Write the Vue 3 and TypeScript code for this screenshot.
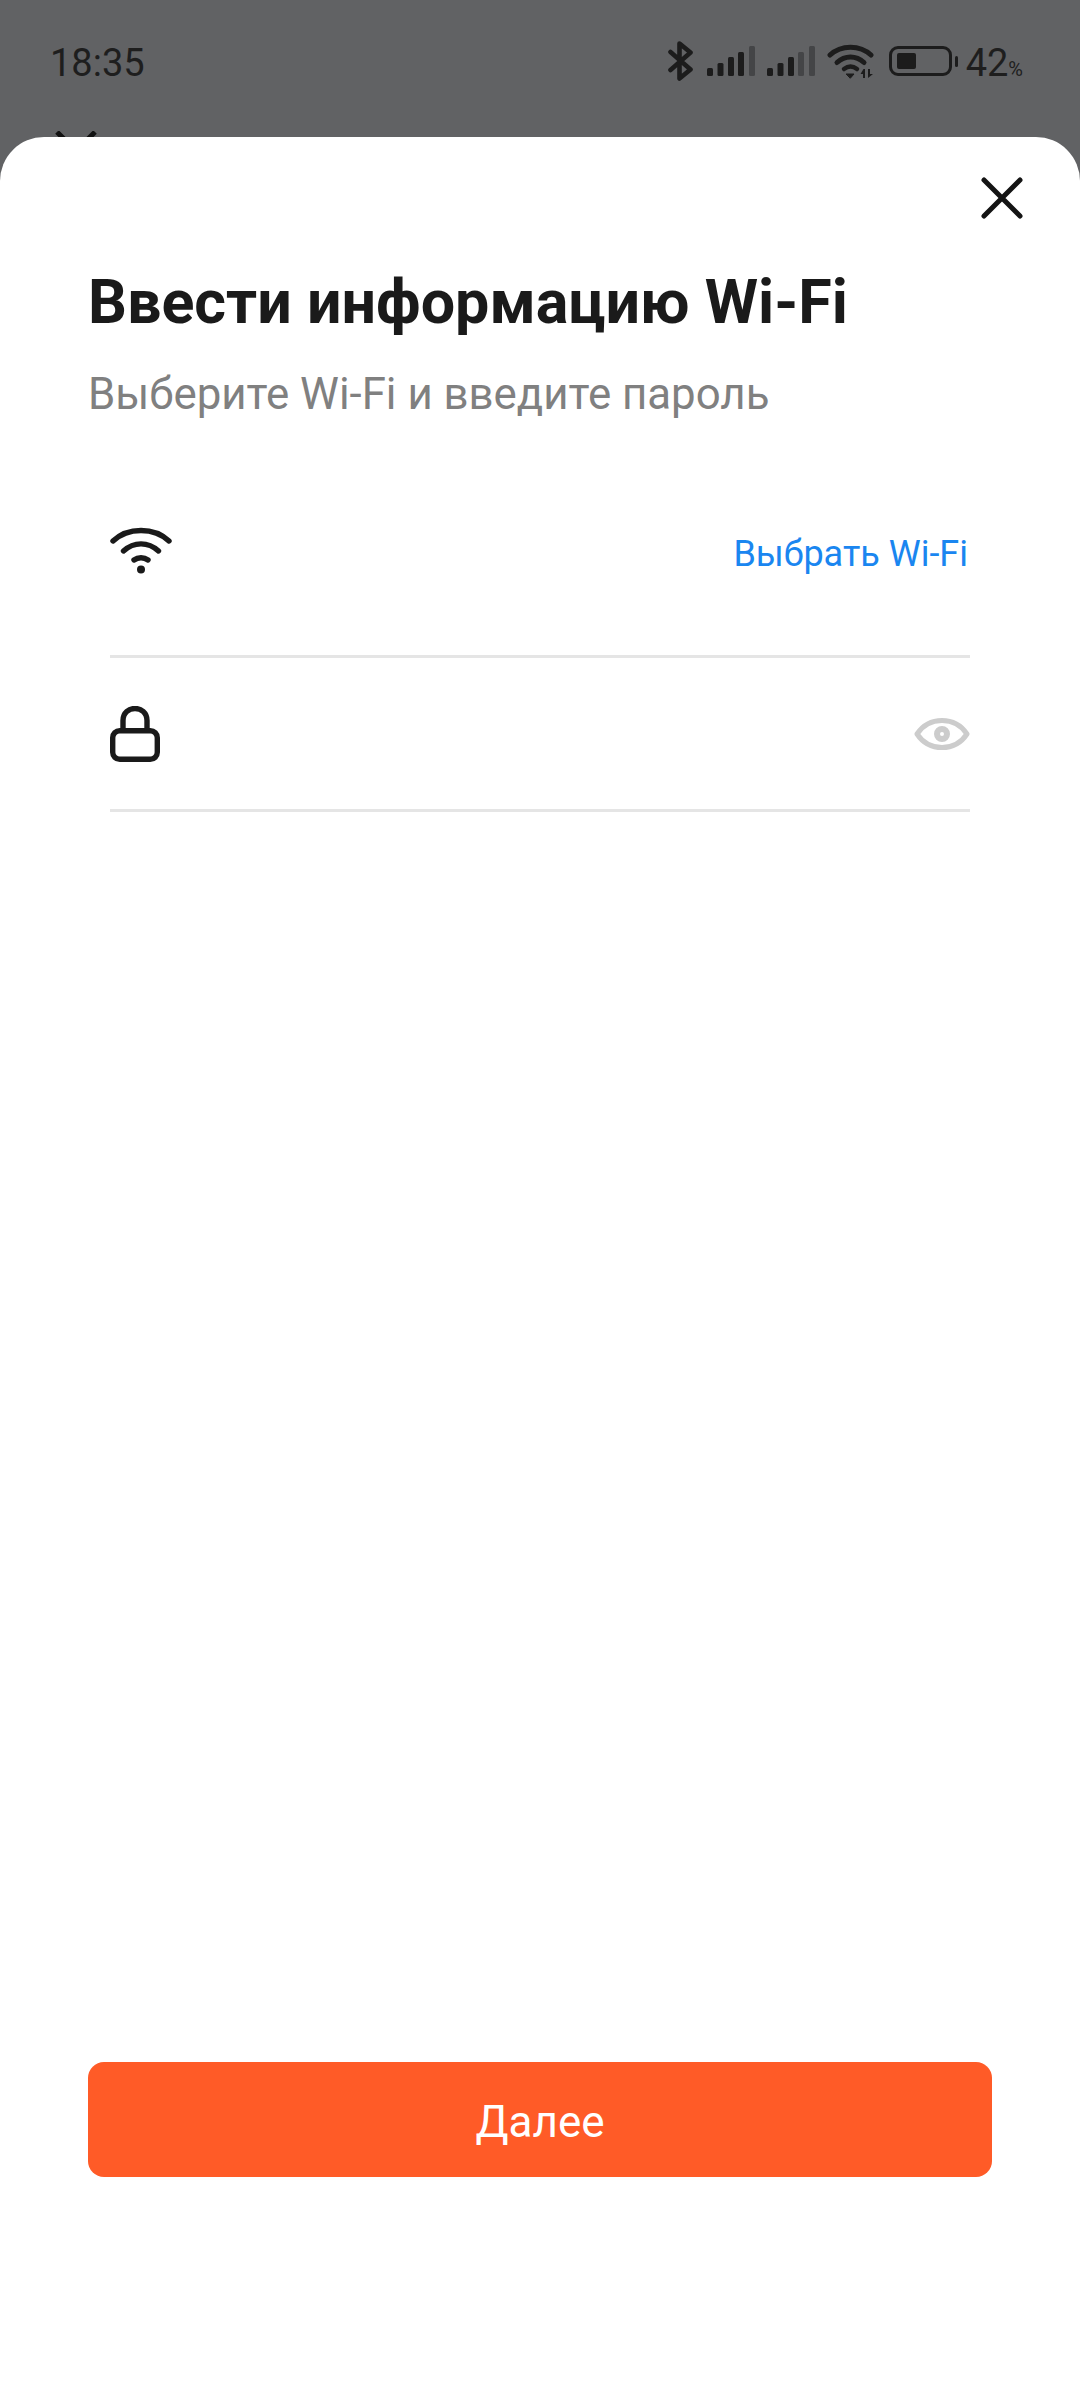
<script setup lang="ts">
const title = 'Ввести информацию Wi-Fi'
const subtitle = 'Выберите Wi-Fi и введите пароль'
const bars = [
  { x: 0, h: 8 },
  { x: 10.5, h: 13 },
  { x: 21, h: 19 },
  { x: 31, h: 24 },
  { x: 42, h: 30 },
]
</script>

<template>
  <div class="screen">
    <header class="backdrop">
      <div class="status">
        <span class="time">18:35</span>
        <div class="status-right">
          <svg class="bt" width="25" height="40" viewBox="0 0 25 40" fill="none" stroke="#1c1c1c" stroke-width="4.600" stroke-linecap="round" stroke-linejoin="round">
            <path d="M2.500 11 L22.500 28.500 L11.500 37.500 V2.500 L22.500 11.500 L2.500 29" />
          </svg>
          <svg class="sig" width="48" height="30" viewBox="0 0 48 30">
            <rect v-for="(b, i) in bars" :key="i" :x="b.x" :y="30 - b.h" width="6" :height="b.h" rx="1.500" :fill="i === 4 ? '#444547' : '#1c1c1c'" />
          </svg>
          <svg class="sig" width="48" height="30" viewBox="0 0 48 30">
            <rect v-for="(b, i) in bars" :key="i" :x="b.x" :y="30 - b.h" width="6" :height="b.h" rx="1.500" :fill="i >= 3 ? '#444547' : '#1c1c1c'" />
          </svg>
          <svg class="wifi-s" width="47" height="35" viewBox="0 0 47 35" fill="none" stroke="#1c1c1c" stroke-width="5" stroke-linecap="round">
            <path d="M3 11 C14 0.500 33 0.500 44 11" />
            <path d="M10 18.500 C18 11 29 11 37 18.500" />
            <path d="M17 25 C21 22 26 22 30 25" stroke-width="4.500" />
            <path d="M19.500 30 H27 L23.500 34 Z" fill="#1c1c1c" stroke-width="1" />
            <path d="M36.500 25 L33.500 30 H36 V34 H38 V25 Z M41 25 V34 L46 30 H43 V25 Z" fill="#1c1c1c" stroke="none" />
          </svg>
          <div class="battery">
            <div class="batt-body"><div class="batt-fill"></div></div>
            <div class="batt-tip"></div>
          </div>
          <span class="pct">42<small>%</small></span>
        </div>
      </div>
      <svg class="peek" width="42" height="8" viewBox="0 0 42 8" fill="none" stroke="#111" stroke-width="5">
        <path d="M2 1 L9 8 M40 1 L33 8" />
      </svg>
    </header>

    <main class="sheet">
      <div class="close-row">
        <svg width="42" height="42" viewBox="0 0 42 42" fill="none" stroke="#141414" stroke-width="5" stroke-linecap="round">
          <path d="M3 3 L39 39 M39 3 L3 39" />
        </svg>
      </div>
      <h1 class="title">{{ title }}</h1>
      <p class="subtitle">{{ subtitle }}</p>

      <div class="field first">
        <svg class="field-wifi" width="62" height="48" viewBox="0 0 62 48" fill="none" stroke="#1a1a1a" stroke-width="5.400" stroke-linecap="round">
          <path d="M3 14 C18 0 44 0 59 14" />
          <path d="M13.500 24 C24 14.500 38 14.500 48.500 24" />
          <path d="M24 33 C28 30 34 30 38 33" />
          <circle cx="31" cy="42.500" r="4" fill="#1a1a1a" stroke="none" />
        </svg>
        <span class="pick">Выбрать Wi-Fi</span>
      </div>

      <div class="field second">
        <svg width="50" height="56" viewBox="0 0 50 56" fill="none" stroke="#1a1a1a" stroke-width="5.400">
          <rect x="2.700" y="24.700" width="44.600" height="28.600" rx="7" />
          <path d="M13 24 V14.500 C13 -1.500 37 -1.500 37 14.500 V24" />
        </svg>
        <svg width="56" height="34" viewBox="0 0 56 34" fill="none" stroke="#cccccc" stroke-width="5">
          <path d="M3 17 C15 -1 41 -1 53 17 C41 35 15 35 3 17 Z" stroke-linejoin="round" />
          <circle cx="28" cy="17" r="5" stroke-width="6" />
        </svg>
      </div>

      <div class="spacer"></div>
      <button class="next" type="button">Далее</button>
    </main>
  </div>
</template>

<style>
html, body { margin: 0; padding: 0; background: #616264; }
</style>

<style scoped>
.screen {
  width: 1080px;
  height: 2400px;
  display: flex;
  flex-direction: column;
  overflow: hidden;
  background: #616264;
  font-family: Roboto, "Noto Sans", sans-serif;
}
.backdrop {
  height: 137px;
  flex: none;
  padding: 0 57px 0 50px;
  box-sizing: border-box;
  display: flex;
  flex-direction: column;
  overflow: hidden;
}
.status {
  height: 122px;
  flex: none;
  display: flex;
  align-items: center;
  justify-content: space-between;
}
.time {
  font-size: 38px;
  color: #1e1e1e;
  line-height: 1;
  margin-top: 4px;
}
.status-right {
  display: flex;
  align-items: center;
  gap: 12px;
}
.bt {
  margin-right: 2px;
}
.battery {
  display: flex;
  align-items: center;
  gap: 3px;
  margin-left: 3px;
}
.batt-body {
  width: 63px;
  height: 30px;
  box-sizing: border-box;
  border: 3px solid #1c1c1c;
  border-radius: 9px;
  padding: 4px 5px;
}
.batt-fill {
  width: 19px;
  height: 100%;
  background: #1c1c1c;
  border-radius: 2px;
}
.batt-tip {
  width: 3px;
  height: 11px;
  background: #1c1c1c;
  border-radius: 2px;
}
.pct {
  font-size: 38px;
  color: #1e1e1e;
  line-height: 1;
  margin-left: -4px;
  margin-top: 4px;
}
.pct small {
  font-size: 20px;
}
.peek {
  margin-left: 5px;
  margin-top: 9px;
  flex: none;
}
.sheet {
  flex: 1;
  background: #fff;
  border-radius: 44px 44px 0 0;
  display: flex;
  flex-direction: column;
  padding: 40px 88px 223px;
  box-sizing: border-box;
}
.close-row {
  display: flex;
  justify-content: flex-end;
  margin-right: -31px;
  height: 42px;
}
.title {
  margin: 47px 0 0;
  font-size: 61px;
  font-weight: 700;
  line-height: 72px;
  color: #1a1a1a;
}
.subtitle {
  margin: 28px 0 0;
  font-size: 43.8px;
  line-height: 56px;
  color: #808080;
}
.field {
  margin: 0 22px;
  display: flex;
  justify-content: space-between;
  border-bottom: 3px solid #e5e5e5;
  box-sizing: border-box;
}
.field.first {
  height: 236px;
  align-items: flex-start;
  padding-top: 105px;
}
.field.second {
  height: 154px;
  align-items: center;
}
.pick {
  font-size: 36px;
  line-height: 42px;
  color: #1a86f0;
  margin-right: 2px;
  margin-top: 6px;
}
.spacer {
  flex: 1;
}
.next {
  height: 115px;
  border: 0;
  border-radius: 16px;
  background: #ff5b27;
  color: #fff;
  font: 400 44px Roboto, "Noto Sans", sans-serif;
  padding: 5px 0 0;
  flex: none;
}
</style>
